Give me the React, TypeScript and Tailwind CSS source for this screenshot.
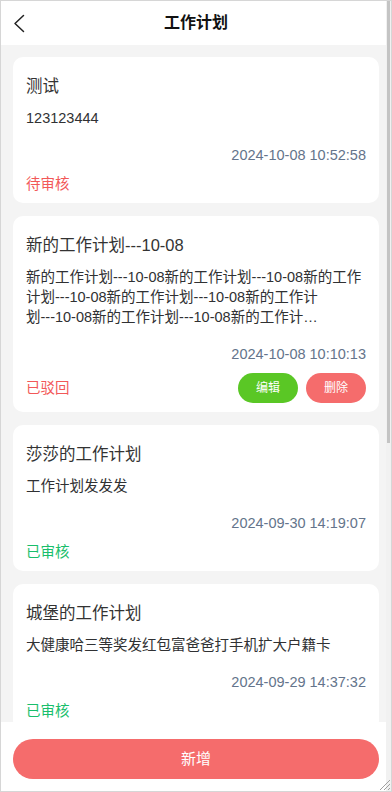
import React from "react";

type Plan = {
  title: string;
  body: string;
  date: string;
  status: "pending" | "rejected" | "approved";
};

const plans: Plan[] = [
  { title: "测试", body: "123123444", date: "2024-10-08 10:52:58", status: "pending" },
  {
    title: "新的工作计划---10-08",
    body: "新的工作计划---10-08新的工作计划---10-08新的工作计划---10-08新的工作计划---10-08新的工作计划---10-08新的工作计划---10-08新的工作计划---10-08新的工作计划---10-08",
    date: "2024-10-08 10:10:13",
    status: "rejected",
  },
  { title: "莎莎的工作计划", body: "工作计划发发发", date: "2024-09-30 14:19:07", status: "approved" },
  { title: "城堡的工作计划", body: "大健康哈三等奖发红包富爸爸打手机扩大户籍卡", date: "2024-09-29 14:37:32", status: "approved" },
];

const keepHyphens = (s: string) => s.replace(/-/g, "\u2060-\u2060");

function Card({ p }: { p: Plan }) {
  return (
    <div className="mx-[13px] rounded-[10px] bg-white px-[13px] pt-[13px] pb-[9px]">
      <div className="text-[16.5px] leading-[32px] text-[#333333]">{p.title}</div>
      <div className="mt-[6px] line-clamp-3 text-[14.5px] leading-[20px] text-[#303133]">{keepHyphens(p.body)}</div>
      <div className="mt-[17px] text-right text-[14.5px] leading-[20px] text-[#64748b]">{p.date}</div>
      <div className="mt-[9px] flex min-h-[20px] items-center justify-between">
        {p.status === "pending" && <span className="text-[14.5px] leading-[20px] text-[#f25858]">待审核</span>}
        {p.status === "rejected" && <span className="text-[14.5px] leading-[20px] text-[#f25858]">已驳回</span>}
        {p.status === "approved" && <span className="text-[14.5px] leading-[20px] text-[#19be6b]">已审核</span>}
        {p.status === "rejected" && (
          <div className="flex gap-[8px]">
            <button className="h-[30px] w-[60px] rounded-full bg-[#5ac725] text-[12px] text-white">编辑</button>
            <button className="h-[30px] w-[60px] rounded-full bg-[#f56c6c] text-[12px] text-white">删除</button>
          </div>
        )}
      </div>
    </div>
  );
}

export default function App() {
  return (
    <div
      className="relative flex h-[792px] w-[392px] flex-col overflow-hidden bg-[#f4f4f4]"
      style={{ fontFamily: "'Liberation Sans','Noto Sans CJK SC',sans-serif" }}
    >
      <div className="flex-1 overflow-hidden">
        <div className="relative flex h-[45px] items-center justify-center bg-white">
          <div className="absolute left-[13px] top-[14px]">
            <svg width="12" height="19" viewBox="0 0 12 19" fill="none">
              <path d="M10.5 1.5 L2 9.5 L10.5 17.5" stroke="#222" strokeWidth="1.5" strokeLinecap="round" strokeLinejoin="round" />
            </svg>
          </div>
          <span className="text-[16px] font-bold text-[#111]">工作计划</span>
        </div>
        <div className="flex flex-col gap-[13px] pt-[12px]">
          {plans.map((p, i) => (
            <Card key={i} p={p} />
          ))}
        </div>
      </div>
      <div className="h-[70px] bg-white px-[13px] pt-[17px]">
        <button className="h-[40px] w-full rounded-full bg-[#f56c6c] text-[15px] text-white">新增</button>
      </div>
      {/* scrollbar overlay */}
      <div className="pointer-events-none absolute right-[1px] top-0 h-full w-[5px] bg-[#f1f1f1]">
        <div className="ml-[1px] mt-[1px] h-[442px] w-[3px] bg-[#c4c4c4]" />
      </div>
      {/* resize grip */}
      <svg className="pointer-events-none absolute bottom-[1px] right-[1px]" width="14" height="14" viewBox="0 0 14 14">
        <path d="M13 3 L3 13 M13 7 L7 13 M13 11 L11 13" stroke="#a0a0a0" strokeWidth="1" />
      </svg>
      {/* window border */}
      <div className="pointer-events-none absolute inset-0 border border-[#d6d6d6]" />
    </div>
  );
}
